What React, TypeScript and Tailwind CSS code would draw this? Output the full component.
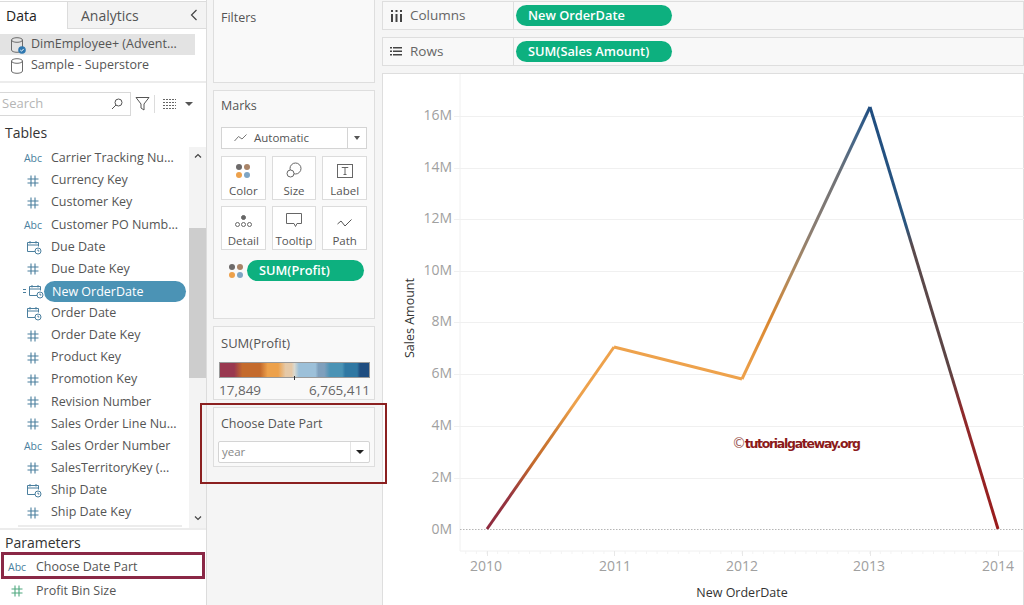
import React from "react";

const FONT = "[font-family:'Open_Sans','Noto_Sans',sans-serif]";

function Hash({ color = "#4a7f9e" }: { color?: string }) {
  return (
    <svg width="12" height="12" viewBox="0 0 12 12" fill="none" stroke={color} strokeWidth="1.1">
      <path d="M4 .5v11M8 .5v11M.5 4h11M.5 8h11" />
    </svg>
  );
}

function Cal() {
  return (
    <svg width="16" height="16" viewBox="0 0 16 16" fill="none" stroke="#4a7f9e" strokeWidth="1">
      <path d="M9 12.500H1.500v-9h11v4M1.500 6h11M4 2v2.500M10 2v2.500" />
      <circle cx="12" cy="12" r="3" fill="#fff" />
      <path d="M12 10.500V12h1.300" />
    </svg>
  );
}

function FieldIcon({ t }: { t: string }) {
  if (t === "abc") return <span className="text-[10.5px] text-[#4a7f9e] leading-none">Abc</span>;
  if (t === "cal") return <span className="translate-x-[1px]"><Cal /></span>;
  return <Hash />;
}

const fields: [string, string][] = [
  ["abc", "Carrier Tracking Nu..."],
  ["num", "Currency Key"],
  ["num", "Customer Key"],
  ["abc", "Customer PO Numb..."],
  ["cal", "Due Date"],
  ["num", "Due Date Key"],
  ["new", "New OrderDate"],
  ["cal", "Order Date"],
  ["num", "Order Date Key"],
  ["num", "Product Key"],
  ["num", "Promotion Key"],
  ["num", "Revision Number"],
  ["num", "Sales Order Line Nu..."],
  ["abc", "Sales Order Number"],
  ["num", "SalesTerritoryKey (..."],
  ["cal", "Ship Date"],
  ["num", "Ship Date Key"],
];

function Db({ check }: { check?: boolean }) {
  return (
    <svg width="18" height="18" viewBox="0 0 18 18" fill="none" stroke="#6b6b6b" strokeWidth="1">
      <ellipse cx="8" cy="4" rx="5.500" ry="2.300" />
      <path d="M2.500 4v10c0 1.300 2.500 2.300 5.500 2.300s5.500-1 5.500-2.300V4" />
      {check && (
        <>
          <circle cx="13" cy="14" r="3.800" fill="#2f78b0" stroke="none" />
          <path d="M11.300 14l1.200 1.200 2.200-2.300" stroke="#fff" strokeWidth="1" />
        </>
      )}
    </svg>
  );
}

function Sidebar() {
  return (
    <aside className="w-[207px] h-full shrink-0 flex flex-col border-r border-[#dcdcdc] bg-white">
      <div className="h-[29px] flex shrink-0 pt-px">
        <div className="w-[67px] border-t border-[#dcdcdc] pl-[6px] pt-[4px] text-[14px] leading-[20px] text-[#222] font-medium">Data</div>
        <div className="flex-1 flex items-center justify-between bg-[#f3f3f3] border border-[#dcdcdc] border-r-0 pl-[13px] pr-[8px] text-[14px] text-[#555]">
          <span>Analytics</span>
          <svg width="8" height="12" viewBox="0 0 8 12" fill="none" stroke="#444" strokeWidth="1.200"><path d="M6.500 1 1.500 6l5 5" /></svg>
        </div>
      </div>
      <div className="h-[54px] shrink-0 pt-[5px] border-b-2 border-[#ececec]">
        <div className="w-[195px] h-[21px] bg-[#e3e3e3] flex items-center pl-[9px] gap-[4px] text-[12.5px] text-[#555]">
          <Db check />
          <span>DimEmployee+ (Advent...</span>
        </div>
        <div className="h-[21px] flex items-center pl-[9px] gap-[4px] text-[12.5px] text-[#555]">
          <Db />
          <span>Sample - Superstore</span>
        </div>
      </div>
      <div className="h-[37px] shrink-0 flex items-start pt-[9px]">
        <div className="w-[131px] h-[24px] border border-l-0 border-[#d8d8d8] flex items-center justify-between pl-[2px] pr-[7px] text-[13px] text-[#b5b5b5]">
          <span>Search</span>
          <svg width="12" height="12" viewBox="0 0 12 12" fill="none" stroke="#555" strokeWidth="1"><circle cx="7.500" cy="4.500" r="3.500" /><path d="M5 7 1 11" /></svg>
        </div>
        <svg className="ml-[4px] mt-[4px]" width="15" height="15" viewBox="0 0 15 15" fill="none" stroke="#555" strokeWidth="1"><path d="M1 1.500h13L9 8v6L6 12V8z" /></svg>
        <div className="w-px h-[18px] bg-[#dcdcdc] ml-[4px] mt-[3px]" />
        <svg className="ml-[8px] mt-[7px]" width="13" height="10" viewBox="0 0 13 10" fill="none" stroke="#666" strokeWidth="1" strokeDasharray="2 1"><path d="M0 .5h13M0 3.500h13M0 6.500h13M0 9.500h13" /></svg>
        <div className="ml-[9px] mt-[10px] w-0 h-0 border-x-[4px] border-x-transparent border-t-[4px] border-t-[#555]" />
      </div>
      <div className="h-[27px] shrink-0 pl-[5px] pt-[3px] text-[14px] leading-[20px] font-medium text-[#333]">Tables</div>
      <div className="h-[383px] shrink-0 flex border-b-2 border-[#ececec]">
        <div className="flex-1 min-w-0 flex flex-col pl-[22px] pt-[0.5px]">
          {fields.map(([t, name]) =>
            t === "new" ? (
              <div key={name} className="h-[22.13px] flex items-center shrink-0">
                <span className="w-[22px] flex items-center justify-end gap-px">
                  <svg width="4" height="5" viewBox="0 0 4 5" fill="#4a7f9e"><path d="M0 0h3v1H0zM0 3h3v1H0z" /></svg>
                  <span className="w-[16px] block"><Cal /></span>
                </span>
                <span className="w-[142px] h-[21px] rounded-full bg-[#4b93b5] text-white text-[12.5px] leading-[21px] pl-[8px]">{name}</span>
              </div>
            ) : (
              <div key={name} className="h-[22.13px] flex items-center shrink-0 text-[12.5px] text-[#555] whitespace-nowrap">
                <span className="w-[22px] flex justify-center"><FieldIcon t={t} /></span>
                <span className="ml-[7px]">{name}</span>
              </div>
            )
          )}
          <div className="mt-px -ml-[4px] w-[164px] h-[2px] shrink-0 bg-[#ececec]" />
        </div>
        <div className="w-[17px] shrink-0 flex flex-col bg-[#f3f3f3]">
          <div className="h-[81px] pt-[6px] flex justify-center">
            <svg width="8" height="6" viewBox="0 0 8 6" fill="none" stroke="#444" strokeWidth="1.200"><path d="M1 4.500 4 1.500l3 3" /></svg>
          </div>
          <div className="h-[150px] bg-[#cdcdcd]" />
          <div className="flex-1 flex items-end justify-center pb-[7px]">
            <svg width="8" height="6" viewBox="0 0 8 6" fill="none" stroke="#444" strokeWidth="1.200"><path d="M1 1.500 4 4.500l3-3" /></svg>
          </div>
        </div>
      </div>
      <div className="h-[22px] shrink-0 pl-[5px] pt-[3px] text-[14px] leading-[20px] font-medium text-[#333]">Parameters</div>
      <div className="mx-px h-[27px] shrink-0 border-[3px] border-[#8a2846] flex items-center pl-[4px] pt-[4px] text-[12.5px] text-[#555]">
        <span className="w-[28px] text-[10.5px] text-[#4a7f9e]">Abc</span>
        <span>Choose Date Part</span>
      </div>
      <div className="h-[24px] shrink-0 flex items-center pl-[11px] text-[12.5px] text-[#555]">
        <span className="w-[25px] flex"><Hash color="#4fa87f" /></span>
        <span>Profit Bin Size</span>
      </div>
    </aside>
  );
}

function MarkBtn({ label, children }: { label: string; children: React.ReactNode }) {
  return (
    <div className="border border-[#dcdcdc] bg-white flex flex-col items-center h-[44px] text-[11.5px] text-[#555]">
      <div className="h-[21px] flex items-end">{children}</div>
      <span className="mt-[5px] leading-[16px]">{label}</span>
    </div>
  );
}

function Dots({ s = 6 }: { s?: number }) {
  const cs = ["#6d6a6a", "#a98468", "#eda14b", "#7fa5c4"];
  return (
    <span className="grid grid-cols-2 gap-[2px]">
      {cs.map((c) => (
        <span key={c} className="rounded-full block" style={{ background: c, width: s, height: s }} />
      ))}
    </span>
  );
}

const LEGEND =
  "linear-gradient(90deg,#99384f 0 9.5%,#c46a2c 15% 27%,#eda14b 32% 39%,#e5c9a8 44% 48%,#d9d9d0 50%,#9cc0d9 53% 64%,#7fa0bd 66% 70%,#4a93b5 74% 82%,#2f78a3 84% 92%,#1f4d80 94% 100%)";

function Middle() {
  return (
    <div className="w-[175px] h-full shrink-0 bg-[#f5f5f5] flex flex-col gap-[7px] pl-[6px] pr-[7px]">
      <section className="h-[83px] shrink-0 bg-[#f9f9f9] border border-[#dedede] border-t-0 pl-[7px] pt-[9px] text-[12.5px] text-[#555]">Filters</section>
      <section className="h-[229px] shrink-0 bg-[#f9f9f9] border border-[#dedede] px-[7px] pt-[6px] text-[12.5px] text-[#555]">
        <div className="leading-[18px]">Marks</div>
        <div className="mt-[12px] h-[22px] border border-[#d4d4d4] bg-white flex items-center text-[11.5px]">
          <div className="flex-1 flex items-center pl-[12px] gap-[7px]">
            <svg width="13" height="8" viewBox="0 0 13 8" fill="none" stroke="#777" strokeWidth="1"><path d="M.5 7 4.500 2.500 8 5l4.500-4.500" /></svg>
            Automatic
          </div>
          <div className="w-[19px] h-full border-l border-[#d4d4d4] flex items-center justify-center">
            <div className="w-0 h-0 border-x-[3.500px] border-x-transparent border-t-[4px] border-t-[#555]" />
          </div>
        </div>
        <div className="mt-[7px] grid grid-cols-3 gap-x-[6px] gap-y-[6px]">
          <MarkBtn label="Color"><Dots /></MarkBtn>
          <MarkBtn label="Size">
            <svg width="16" height="16" viewBox="0 0 16 16" fill="none" stroke="#666" strokeWidth="1"><circle cx="9.500" cy="6.500" r="5.500" /><circle cx="4.500" cy="11.500" r="3.500" fill="#fff" /></svg>
          </MarkBtn>
          <MarkBtn label="Label">
            <svg width="16" height="14" viewBox="0 0 16 14" fill="none" stroke="#666" strokeWidth="1"><rect x=".5" y=".5" width="15" height="13" /><path d="M5 4V3.500h6V4M8 3.500v7M6.500 10.500h3" /></svg>
          </MarkBtn>
          <MarkBtn label="Detail">
            <svg width="17" height="13" viewBox="0 0 17 13" fill="none" stroke="#666" strokeWidth="1"><circle cx="8.500" cy="2.500" r="2" fill="#666" /><circle cx="2.500" cy="9.500" r="2" /><circle cx="8.500" cy="9.500" r="2" /><circle cx="14.500" cy="9.500" r="2" /></svg>
          </MarkBtn>
          <MarkBtn label="Tooltip">
            <svg width="16" height="15" viewBox="0 0 16 15" fill="none" stroke="#666" strokeWidth="1"><path d="M.5.500h15v10H11l-1.500 3-1.500-3H.5z" /></svg>
          </MarkBtn>
          <MarkBtn label="Path">
            <svg width="15" height="9" viewBox="0 0 15 9" fill="none" stroke="#555" strokeWidth="1"><path d="M.5 5 4 2l4 5 6.500-6.500" /></svg>
          </MarkBtn>
        </div>
        <div className="mt-[10px] flex items-center">
          <span className="ml-[8px]"><Dots s={6} /></span>
          <span className="ml-[4px] w-[117px] h-[21px] rounded-full bg-[#0db07f] text-white font-semibold text-[12.8px] leading-[21px] pl-[12px]">SUM(Profit)</span>
        </div>
      </section>
      <section className="h-[74px] shrink-0 bg-[#f9f9f9] border border-[#dedede] px-[4px] pt-[7px] text-[13px] text-[#555]">
        <div className="pl-[3px] leading-[18px]">SUM(Profit)</div>
        <div className="relative mt-[10px] h-[16px] border border-[#999] ml-px" style={{ background: LEGEND }}>
          <div className="absolute left-[74px] -bottom-[3px] w-px h-[4px] bg-[#333]" />
        </div>
        <div className="mt-[4px] flex justify-between text-[#666] text-[13.5px] leading-[16px] pl-px"><span>17,849</span><span>6,765,411</span></div>
      </section>
      <section className="h-[60px] shrink-0 bg-[#f9f9f9] border border-[#dedede] px-[4px] pt-[7px] text-[12.5px] text-[#555]">
        <div className="pl-[3px] leading-[18px]">Choose Date Part</div>
        <div className="mt-[8px] h-[22px] border border-[#d4d4d4] rounded-[2px] bg-white flex items-center">
          <span className="flex-1 pl-[3px] text-[#888] text-[11.5px]">year</span>
          <div className="w-[19px] h-full border-l border-[#e4e4e4] flex items-center justify-center">
            <div className="w-0 h-0 border-x-[4px] border-x-transparent border-t-[4px] border-t-[#222]" />
          </div>
        </div>
      </section>
    </div>
  );
}

function Shelf({ icon, label, pill }: { icon: React.ReactNode; label: string; pill: string }) {
  return (
    <div className="h-[29px] shrink-0 flex items-center bg-[#f8f8f8] border border-[#dedede] text-[13.5px] text-[#666]">
      <div className="w-[131px] h-full flex items-center pl-[7px] gap-[8px] border-r border-[#dedede]">
        <span className="w-[12px] flex justify-center">{icon}</span>
        {label}
      </div>
      <span className="ml-[2px] w-[156px] h-[21px] rounded-full bg-[#0db07f] text-white font-semibold text-[12.8px] leading-[21px] pl-[12px]">{pill}</span>
    </div>
  );
}

const W = 642;
const H = 532;
const ox = 382;
const oy = 73;
const pts = [
  [486, 528],
  [613, 346],
  [741, 378],
  [869, 106],
  [997, 528],
].map(([x, y]) => [x - ox, y - oy]);

function Chart() {
  const yt: [string, number][] = [
    ["16M", 115], ["14M", 167], ["12M", 218], ["10M", 270], ["8M", 321], ["6M", 373], ["4M", 425], ["2M", 477],
  ];
  const xt: [string, number, number][] = [
    ["2010", 486, 485], ["2011", 613, 614], ["2012", 741, 741], ["2013", 869, 868], ["2014", 997, 997],
  ];
  const months = Array.from({ length: 50 }, (_, i) => 486 + (i - 2) * 10.63).filter((x) => x > 460);
  return (
    <div className="flex-1 min-h-0 bg-white border border-[#dedede] border-b-0 mt-[7px]">
      <svg width={W} height={H} viewBox={`0 0 ${W} ${H}`} className="block" style={{ fontFamily: "'Open Sans',sans-serif" }}>
        <defs>
          <linearGradient id="g1" gradientUnits="userSpaceOnUse" x1={pts[0][0]} y1={pts[0][1]} x2={pts[1][0]} y2={pts[1][1]}>
            <stop offset="0" stopColor="#8e2a3e" /><stop offset=".18" stopColor="#96353f" /><stop offset=".36" stopColor="#c46a2c" /><stop offset=".52" stopColor="#cf7d33" /><stop offset=".68" stopColor="#eda14b" /><stop offset="1" stopColor="#eea24c" />
          </linearGradient>
          <linearGradient id="g3" gradientUnits="userSpaceOnUse" x1={pts[2][0]} y1={pts[2][1]} x2={pts[3][0]} y2={pts[3][1]}>
            <stop offset="0" stopColor="#eea24c" /><stop offset=".22" stopColor="#d9862f" /><stop offset=".38" stopColor="#b08a5e" /><stop offset=".55" stopColor="#8a7d72" /><stop offset=".75" stopColor="#6f7277" /><stop offset=".9" stopColor="#3f648a" /><stop offset="1" stopColor="#1f4d80" />
          </linearGradient>
          <linearGradient id="g4" gradientUnits="userSpaceOnUse" x1={pts[3][0]} y1={pts[3][1]} x2={pts[4][0]} y2={pts[4][1]}>
            <stop offset="0" stopColor="#1f4d80" /><stop offset=".28" stopColor="#2a5680" /><stop offset=".33" stopColor="#5a4a4c" /><stop offset=".62" stopColor="#5c4444" /><stop offset=".72" stopColor="#8e2a2c" /><stop offset="1" stopColor="#9a1c1c" />
          </linearGradient>
        </defs>
        <path d={`M${459 - ox} 0V${550 - oy}H${W}`} fill="none" stroke="#f0f0f0" />
        {months.map((x) => (
          <path key={x} d={`M${x - ox} ${550 - oy}v3`} stroke="#f3f3f3" />
        ))}
        {yt.map(([l, y]) => (
          <g key={l}>
            <path d={`M${453 - ox} ${y - oy + 0.5}H${W}`} stroke="#f0f0f0" />
            <text x={451 - ox} y={y - oy + 4} textAnchor="end" fontSize="14" fill="#a0a0a0">{l}</text>
          </g>
        ))}
        <text x={451 - ox} y={528 - oy + 5} textAnchor="end" fontSize="14" fill="#a0a0a0">0M</text>
        <path d={`M${459 - ox} ${528 - oy + 0.5}H${W}`} stroke="#b5b5b5" strokeDasharray="1.500 1.500" />
        {xt.map(([l, x, lx]) => (
          <g key={l}>
            <path d={`M${x - ox + 0.5} ${550 - oy}v5`} stroke="#e8e8e8" />
            <text x={lx - ox} y={570 - oy} textAnchor="middle" fontSize="14" fill="#a0a0a0">{l}</text>
          </g>
        ))}
        <text transform={`translate(${413 - ox} ${317 - oy}) rotate(-90)`} textAnchor="middle" fontSize="12.500" fill="#333">Sales Amount</text>
        <text x={741 - ox} y={596 - oy} textAnchor="middle" fontSize="12.500" fill="#333">New OrderDate</text>
        <g fill="none" strokeWidth="3" strokeLinejoin="round">
          <path d={`M${pts[0]}L${pts[1]}`} stroke="url(#g1)" />
          <path d={`M${pts[1]}L${pts[2]}`} stroke="#eea24c" />
          <path d={`M${pts[2]}L${pts[3]}`} stroke="url(#g3)" />
          <path d={`M${pts[3]}L${pts[4]}`} stroke="url(#g4)" />
        </g>
        <text x={731 - ox} y={447 - oy} fontSize="12.500" fontWeight="700" fill="#8b1a1a" style={{ fontFamily: "'DejaVu Sans',sans-serif" }} textLength="129">
          <tspan fontWeight="400" fontSize="14" fill="#a0605a">©</tspan>tutorialgateway.org
        </text>
      </svg>
    </div>
  );
}

export default function App() {
  return (
    <div className={`relative w-[1024px] h-[605px] overflow-hidden bg-[#f5f5f5] flex ${FONT}`}>
      <Sidebar />
      <Middle />
      <main className="flex-1 min-w-0 flex flex-col pt-px">
        <Shelf
          label="Columns"
          pill="New OrderDate"
          icon={<svg width="11" height="12" viewBox="0 0 11 12" fill="#444"><path d="M0 4h2v8H0zM4.500 4h2v8h-2zM9 4h2v8H9zM0 0h2v2H0zM4.500 0h2v2h-2zM9 0h2v2H9z" /></svg>}
        />
        <div className="h-[7px] shrink-0" />
        <Shelf
          label="Rows"
          pill="SUM(Sales Amount)"
          icon={<svg width="12" height="9" viewBox="0 0 12 9" fill="#444"><path d="M0 0h2v1.500H0zM3 0h9v1.500H3zM0 3.500h2V5H0zM3 3.500h9V5H3zM0 7h2v1.500H0zM3 7h9v1.500H3z" /></svg>}
        />
        <Chart />
      </main>
      <div className="absolute left-[200px] top-[403px] w-[187px] h-[81px] border-2 border-[#8b2020] pointer-events-none" />
    </div>
  );
}
